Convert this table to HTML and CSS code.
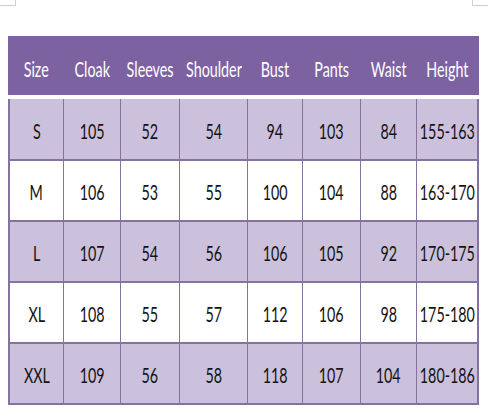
FILE: index.html
```html
<!DOCTYPE html>
<html>
<head>
<meta charset="utf-8">
<link rel="stylesheet" href="styles.css">
</head>
<body>
<div class="marks"><span class="mark mark-left"></span><span class="mark mark-right"></span></div>
<div class="table">
  <div class="grid head">
    <div class="cell"><span>Size</span></div>
    <div class="cell"><span>Cloak</span></div>
    <div class="cell"><span>Sleeves</span></div>
    <div class="cell"><span>Shoulder</span></div>
    <div class="cell"><span>Bust</span></div>
    <div class="cell"><span>Pants</span></div>
    <div class="cell"><span>Waist</span></div>
    <div class="cell"><span>Height</span></div>
  </div>
  <div class="grid body">
    <div class="cell alt"><span>S</span></div>
    <div class="cell alt"><span>105</span></div>
    <div class="cell alt"><span>52</span></div>
    <div class="cell alt"><span>54</span></div>
    <div class="cell alt"><span>94</span></div>
    <div class="cell alt"><span>103</span></div>
    <div class="cell alt"><span>84</span></div>
    <div class="cell alt"><span>155-163</span></div>

    <div class="cell"><span>M</span></div>
    <div class="cell"><span>106</span></div>
    <div class="cell"><span>53</span></div>
    <div class="cell"><span>55</span></div>
    <div class="cell"><span>100</span></div>
    <div class="cell"><span>104</span></div>
    <div class="cell"><span>88</span></div>
    <div class="cell"><span>163-170</span></div>

    <div class="cell alt"><span>L</span></div>
    <div class="cell alt"><span>107</span></div>
    <div class="cell alt"><span>54</span></div>
    <div class="cell alt"><span>56</span></div>
    <div class="cell alt"><span>106</span></div>
    <div class="cell alt"><span>105</span></div>
    <div class="cell alt"><span>92</span></div>
    <div class="cell alt"><span>170-175</span></div>

    <div class="cell"><span>XL</span></div>
    <div class="cell"><span>108</span></div>
    <div class="cell"><span>55</span></div>
    <div class="cell"><span>57</span></div>
    <div class="cell"><span>112</span></div>
    <div class="cell"><span>106</span></div>
    <div class="cell"><span>98</span></div>
    <div class="cell"><span>175-180</span></div>

    <div class="cell alt"><span>XXL</span></div>
    <div class="cell alt"><span>109</span></div>
    <div class="cell alt"><span>56</span></div>
    <div class="cell alt"><span>58</span></div>
    <div class="cell alt"><span>118</span></div>
    <div class="cell alt"><span>107</span></div>
    <div class="cell alt"><span>104</span></div>
    <div class="cell alt"><span>180-186</span></div>
  </div>
</div>
</body>
</html>
```
FILE: styles.css
```css
html, body {
  margin: 0;
  padding: 0;
  background: #ffffff;
}
body {
  width: 488px;
  height: 409px;
  overflow: hidden;
  font-family: Lato, "Open Sans", "Liberation Sans", sans-serif;
}
.marks {
  display: flex;
  justify-content: space-between;
  height: 6px;
}
.mark {
  display: block;
  width: 15px;
  height: 5px;
  border-bottom: 1px solid #cfcfcf;
}
.mark-left {
  border-right: 1px solid #cfcfcf;
}
.mark-right {
  border-left: 1px solid #cfcfcf;
}
.table {
  margin: 30px 0 0 8px;
  width: 471px;
}
.grid {
  display: grid;
  grid-template-columns: 53px 56px 58px 67px 54px 57px 55px 60px;
  column-gap: 1px;
  padding: 0 2px;
}
.head {
  background: #7d62a2;
  height: 59px;
  color: #ffffff;
  border-bottom: 4px solid #ffffff;
}
.head .cell {
  padding-top: 4px;
}
.body {
  background: #85739f;
  row-gap: 2px;
  grid-template-rows: 60px 59px 59px 59px 59px;
  padding-bottom: 2px;
}
.cell {
  display: flex;
  align-items: center;
  justify-content: center;
  background: #ffffff;
  color: #141414;
  font-size: 22px;
  white-space: nowrap;
}
.head .cell {
  background: transparent;
  color: #ffffff;
}
.cell.alt {
  background: #ccc1dc;
}
.cell span {
  display: inline-block;
  transform: scaleX(0.65);
  padding-top: 2px;
}
```
